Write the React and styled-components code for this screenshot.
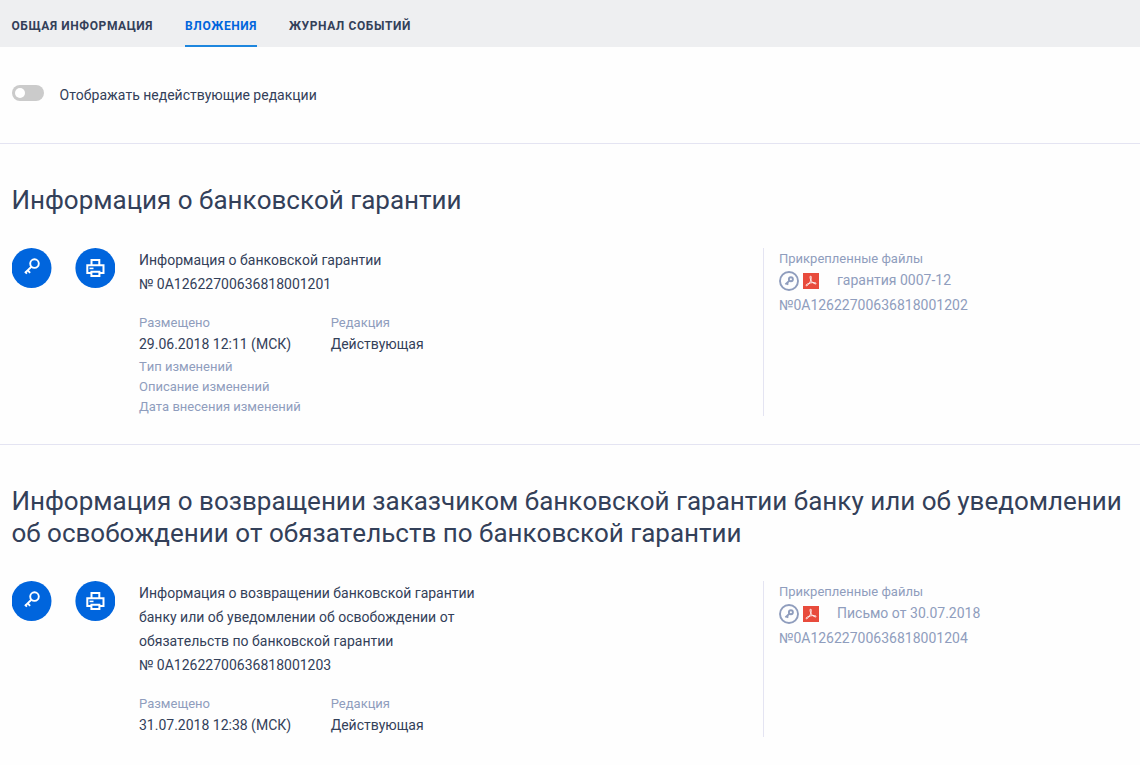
import React from "react";
import styled, { createGlobalStyle, css } from "styled-components";

const tabs = ["Общая информация", "Вложения", "Журнал событий"];

const sections = [
  {
    title: "Информация о банковской гарантии",
    name: "Информация о банковской гарантии",
    number: "№ 0A12622700636818001201",
    placed: "29.06.2018 12:11 (МСК)",
    revision: "Действующая",
    changes: ["Тип изменений", "Описание изменений", "Дата внесения изменений"],
    file: "гарантия 0007-12",
    fileNumber: "№0A12622700636818001202",
  },
  {
    title:
      "Информация о возвращении заказчиком банковской гарантии банку или об уведомлении об освобождении от обязательств по банковской гарантии",
    name: "Информация о возвращении банковской гарантии банку или об уведомлении об освобождении от обязательств по банковской гарантии",
    number: "№ 0A12622700636818001203",
    placed: "31.07.2018 12:38 (МСК)",
    revision: "Действующая",
    changes: [],
    file: "Письмо от 30.07.2018",
    fileNumber: "№0A12622700636818001204",
  },
];

function KeyIcon() {
  return (
    <Icon width="40" height="40" viewBox="0 0 40 40" fill="none" stroke="#fff" strokeWidth="1.9">
      <circle cx="19.5" cy="20" r="20" fill="#0065dd" stroke="none" />
      <circle cx="22.5" cy="15.6" r="4.3" />
      <path d="M19.4 18.7L13.2 24.6M15.6 22.2L18.1 24.8M12.9 23.6L14.9 25.6" />
    </Icon>
  );
}

function PrinterIcon() {
  return (
    <Icon width="40" height="40" viewBox="0 0 40 40" fill="none" stroke="#fff" strokeWidth="2">
      <circle cx="20.4" cy="20" r="20" fill="#0065dd" stroke="none" />
      <path d="M16.5 17V12H24.3V17" />
      <path d="M16.4 25H12.3V17.2H28.5V25H24.4" />
      <path d="M16.4 23.8H24.4V28H16.4Z" />
      <path d="M14.5 20.4H18.5" strokeWidth="1.6" />
    </Icon>
  );
}

function SignatureIcon() {
  return (
    <Icon width="20" height="20" viewBox="0 0 20 20" fill="none" stroke="#8f9dbd">
      <circle cx="10" cy="10" r="9" strokeWidth="1.9" />
      <circle cx="11.9" cy="8.3" r="2" strokeWidth="1.9" />
      <path d="M10.4 9.8L6.4 13.4M7.6 12L9.2 13.6" strokeWidth="1.9" />
    </Icon>
  );
}

function PdfIcon() {
  return (
    <Icon width="16" height="16" viewBox="0 0 16 16" fill="none" stroke="#fff" strokeWidth="0.9">
      <path d="M0 0H16V16H0Z" fill="#e84b3c" stroke="none" />
      <path d="M7.4 3.1C8.5 2.8 8.5 5 7.8 7.2C6.9 10 4.7 12.9 3.3 12.7C2.1 12.2 4.5 10.5 7.5 9.9C10.7 9.2 13.5 9.7 13.1 10.7C12.6 11.6 9.7 9.9 8.4 8.1C7.2 6.4 6.6 3.6 7.4 3.1Z" />
    </Icon>
  );
}

function Attachment({ section }) {
  return (
    <Section>
      <Title>{section.title}</Title>
      <Row>
        <Actions>
          <RoundButton aria-label="Подпись">
            <KeyIcon />
          </RoundButton>
          <RoundButton aria-label="Печать">
            <PrinterIcon />
          </RoundButton>
        </Actions>
        <Details>
          <Name>{section.name}</Name>
          <Value>{section.number}</Value>
          <Fields>
            <Field>
              <Label>Размещено</Label>
              <Value>{section.placed}</Value>
            </Field>
            <Field>
              <Label>Редакция</Label>
              <Value>{section.revision}</Value>
            </Field>
          </Fields>
          {section.changes.map((change) => (
            <Label key={change}>{change}</Label>
          ))}
        </Details>
        <Files>
          <Label>Прикрепленные файлы</Label>
          <FileRow>
            <SignatureIcon />
            <PdfIcon />
            <FileName>{section.file}</FileName>
          </FileRow>
          <Value $muted>{section.fileNumber}</Value>
        </Files>
      </Row>
    </Section>
  );
}

function App() {
  return (
    <>
      <GlobalStyle />
      <Tabs>
        {tabs.map((tab) => (
          <Tab key={tab} $active={tab === "Вложения"}>
            {tab}
          </Tab>
        ))}
      </Tabs>
      <Filter>
        <Switch role="switch" aria-checked="false">
          <Knob />
        </Switch>
        <FilterLabel>Отображать недействующие редакции</FilterLabel>
      </Filter>
      {sections.map((section) => (
        <Attachment key={section.fileNumber} section={section} />
      ))}
    </>
  );
}

const GlobalStyle = createGlobalStyle`
  * {
    box-sizing: border-box;
  }

  body {
    margin: 0;
    background: #fefefe;
    color: #334059;
    font-family: Roboto, "Liberation Sans", sans-serif;
    font-size: 14px;
    font-kerning: none;
    line-height: 24px;
  }
`;

const Icon = styled.svg`
  display: block;
  flex-shrink: 0;
`;

const Tabs = styled.nav`
  display: flex;
  gap: 32px;
  height: 47px;
  padding: 0 11.4px;
  background: #eeeff1;
`;

const Tab = styled.a`
  height: 47px;
  padding-top: 14px;
  border-bottom: 2px solid transparent;
  font-size: 12px;
  font-weight: 700;
  letter-spacing: 0.6px;
  text-transform: uppercase;
  ${(props) =>
    props.$active &&
    css`
      color: #0065dd;
      border-color: #1d86de;
    `}
`;

const Filter = styled.div`
  display: flex;
  gap: 16px;
  height: 97px;
  padding: 36px 11.5px 0;
  border-bottom: 1px solid #e4e4f2;
`;

const Switch = styled.button`
  display: flex;
  align-items: center;
  width: 32px;
  height: 16px;
  margin-top: 2px;
  padding: 0 3px;
  border: 0;
  border-radius: 8px;
  background: #cbcbcb;
`;

const Knob = styled.span`
  width: 10px;
  height: 10px;
  border-radius: 50%;
  background: #fff;
`;

const FilterLabel = styled.span`
  line-height: 24px;
`;

const Section = styled.section`
  padding: 40px 11.4px 28px;

  & + & {
    border-top: 1px solid #e4e4f2;
  }
`;

const Title = styled.h2`
  margin: 0 0 32px;
  font-size: 26px;
  font-weight: 400;
  line-height: 32px;
`;

const Row = styled.div`
  display: flex;
  padding-left: 0.6px;
`;

const Actions = styled.div`
  display: flex;
  gap: 23px;
  margin-right: 24px;
`;

const RoundButton = styled.button`
  width: 40px;
  height: 40px;
  padding: 0;
  border: 0;
  background: none;
`;

const Details = styled.div`
  width: 624px;
`;

const Name = styled.div`
  max-width: 350px;
`;

const Fields = styled.div`
  display: flex;
  gap: 39.5px;
  margin-top: 16px;
`;

const Field = styled.div`
  white-space: nowrap;
`;

const Label = styled.div`
  height: 20px;
  color: #8f9dbd;
  font-size: 13px;
  line-height: 21px;
`;

const Value = styled.div`
  color: ${(props) => (props.$muted ? "#8f9dbd" : "inherit")};
`;

const Files = styled.div`
  padding-left: 15px;
  border-left: 1px solid #e4e4f2;
`;

const FileRow = styled.div`
  display: flex;
  align-items: center;
  gap: 4px;
  height: 25px;
`;

const FileName = styled.span`
  margin-left: 14px;
  padding-bottom: 1px;
  color: #8f9dbd;
`;

export default App;
